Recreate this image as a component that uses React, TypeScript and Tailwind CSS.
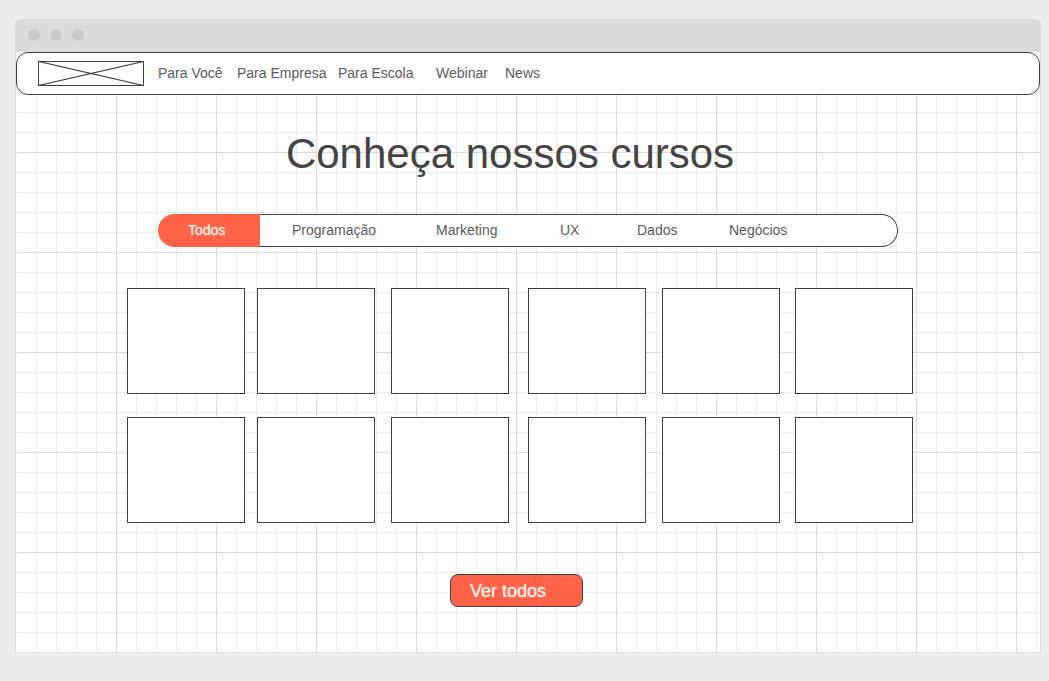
const links = ['Para Você', 'Para Empresa', 'Para Escola', 'Webinar', 'News'];
const categories = ['Programação', 'Marketing', 'UX', 'Dados', 'Negócios'];
const courses = Array.from({ length: 12 }, (_, i) => i);

function TitleBar() {
  return (
    <div className="flex h-[33px] items-center gap-[10px] rounded-t-md bg-[#dcdcdc] pb-px pl-[13px]">
      <span className="size-3 rounded-full bg-[#cacaca]" />
      <span className="size-3 rounded-full bg-[#cacaca]" />
      <span className="size-3 rounded-full bg-[#cacaca]" />
    </div>
  );
}

function Logo() {
  return (
    <svg width="106" height="25" viewBox="0 0 106 25" fill="none" stroke="#404040" className="shrink-0" aria-hidden="true">
      <rect x="0.5" y="0.5" width="105" height="24" shapeRendering="crispEdges" />
      <path d="M0.5 0.5 L105.5 24.5 M105.5 0.5 L0.5 24.5" strokeWidth="1.2" />
    </svg>
  );
}

function NavBar() {
  return (
    <nav className="flex h-[43px] items-center gap-[14px] rounded-xl border border-[#404040] bg-white pl-[21px]">
      <Logo />
      <ul className="grid grid-cols-[79px_101px_98px_69px_auto] pb-[2px] whitespace-nowrap text-sm text-[#5a5a5a]">
        {links.map((label) => (
          <li key={label}>
            <a href="#">{label}</a>
          </li>
        ))}
      </ul>
    </nav>
  );
}

function CategoryTabs() {
  return (
    <div className="mx-auto mt-9 flex h-[33px] w-full max-w-[740px] text-sm">
      <button type="button" className="w-[102px] shrink-0 rounded-l-full bg-[#ff6347] pb-[2px] pl-[30px] text-left text-[#ffeeea] [text-shadow:0_0_1px_#ffeeea]">
        Todos
      </button>
      <div className="grid flex-1 grid-cols-[144px_124px_77px_92px_1fr] rounded-r-full border-y border-r border-[#404040] bg-white text-[#5a5a5a]">
        {categories.map((name) => (
          <button key={name} type="button" className="pb-[2px] pl-[32px] text-left">
            {name}
          </button>
        ))}
      </div>
    </div>
  );
}

function CourseGrid() {
  return (
    <div className="mt-[41px] flex justify-center pr-4">
      <ul className="grid grid-cols-[130px_134px_137px_134px_133px_118px] gap-y-[23px]">
        {courses.map((id) => (
          <li key={id} className="h-[106px] w-[118px] border border-[#404040] bg-white" />
        ))}
      </ul>
    </div>
  );
}

export default function App() {
  return (
    <div className="min-h-screen bg-[#ededed] pt-[19px] pr-2 pb-7 pl-[15px] font-['Liberation_Sans',Arial,sans-serif]">
      <TitleBar />
      <div className="border-x border-b border-[#dcdcdc] bg-white">
        <NavBar />
        <main className="ml-px bg-[linear-gradient(to_right,transparent_99px,#dcdcdc_99px),linear-gradient(to_bottom,transparent_99px,#dcdcdc_99px),linear-gradient(to_right,transparent_19px,#ebebeb_19px),linear-gradient(to_bottom,transparent_19px,#ebebeb_19px)] bg-[size:100px_100px,100px_100px,20px_20px,20px_20px] bg-[position:0_-42px,0_-42px,0_-2px,0_-2px] pt-[35px] pr-px pb-[45px]">
          <h1 className="pr-9 text-center text-[42px] leading-[48px] text-[#444]">Conheça nossos cursos</h1>
          <CategoryTabs />
          <CourseGrid />
          <div className="mt-[51px] flex justify-center pr-[23px]">
            <button type="button" className="h-[33px] w-[133px] rounded-lg border border-[#404040] bg-[#ff6347] pl-[19px] text-left text-lg leading-none text-[#ffeeea] [text-shadow:0_0_1px_#ffeeea]">
              Ver todos
            </button>
          </div>
        </main>
      </div>
    </div>
  );
}
